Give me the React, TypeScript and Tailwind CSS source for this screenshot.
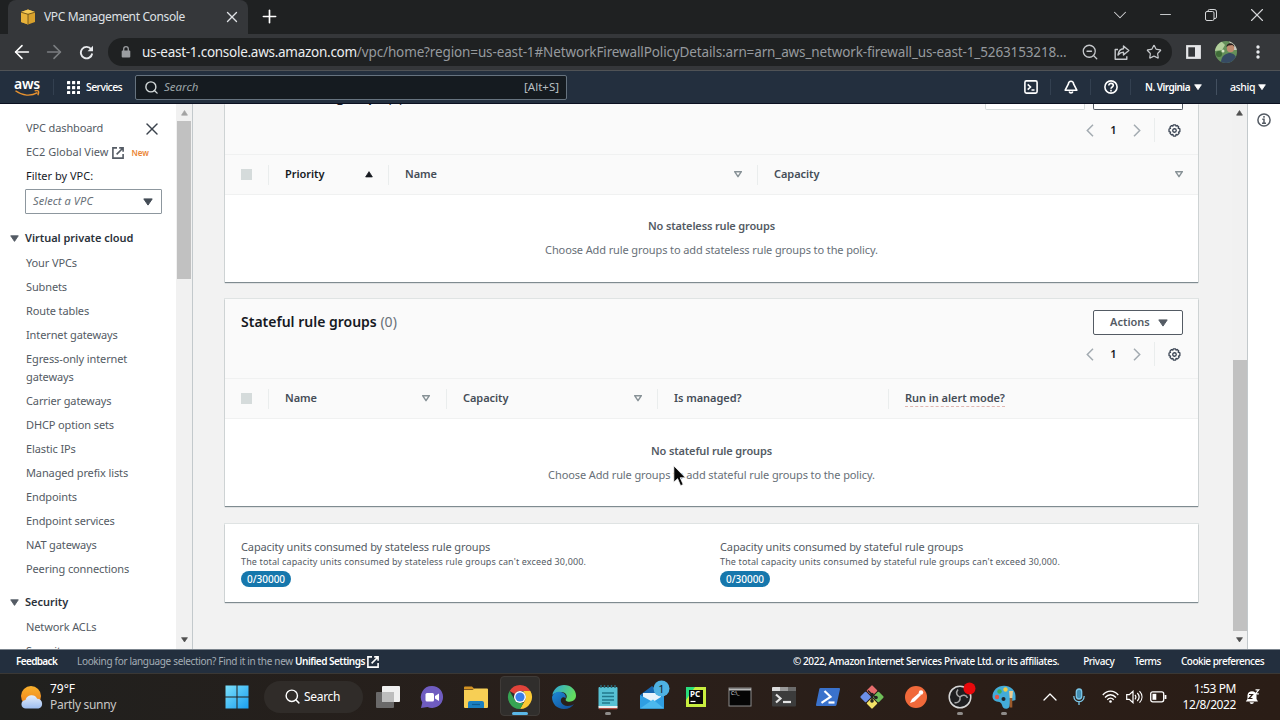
import type { ReactNode } from "react";
import { Search, Star, X, Plus, ArrowLeft, ArrowRight, Minus, ChevronDown, ChevronUp, ZoomOut } from "lucide-react";

const vpcLinks = [
    "Your VPCs", "Subnets", "Route tables", "Internet gateways", "Egress-only internet gateways",
    "Carrier gateways", "DHCP option sets", "Elastic IPs", "Managed prefix lists", "Endpoints",
    "Endpoint services", "NAT gateways", "Peering connections",
];

function Triangle({ up = false, hollow = false, size = 9, className = "" }: { up?: boolean; hollow?: boolean; size?: number; className?: string }) {
    return (
        <svg width={size} height={size * 0.8} viewBox="0 0 10 8" className={`shrink-0 ${className}`}>
            <path d={up ? "M.8 7.4 5 .8 9.2 7.4Z" : "M.8.9 5 7.1 9.2.9Z"} fill={hollow ? "none" : "currentColor"} stroke="currentColor" strokeWidth={hollow ? 1.8 : 1} strokeLinejoin="round" />
        </svg>
    );
}

function External({ className = "" }: { className?: string }) {
    return (
        <svg width="12" height="12" viewBox="0 0 12 12" fill="none" stroke="currentColor" strokeWidth="1.6" className={`shrink-0 ${className}`}>
            <path d="M5 .9H.9v10.2h10.2V7M7.2.9h3.9v3.8M11 1 4.6 7.4" />
        </svg>
    );
}

function Gear() {
    return (
        <svg width="13" height="13" viewBox="0 0 14 14" fill="none" stroke="#3b4554" strokeWidth="1.4" strokeLinejoin="round">
            <path d="M5.8.9h2.4l.4 1.3 1.3-.6 1.7 1.6-.7 1.3 1.9.8v2.9l-1.5.5.6 1.4-1.8 1.7-1.4-.7-.5 1.9H5.8l-.5-1.8-1.4.6-1.7-1.7.6-1.4-1.7-.5V5.4l1.6-.6-.6-1.4 1.7-1.7 1.4.6Z" />
            <circle cx="7" cy="7" r="1.9" />
        </svg>
    );
}

function BrowserTabs() {
    return (
        <div className="flex h-[34px] bg-[#1f2122] pl-2 text-[#dfe1e5]">
            <div className="flex h-full w-[240px] items-center rounded-t-lg bg-[#35373a] pl-[12px] pr-[7px]">
                <svg width="16" height="16" viewBox="0 0 16 16">
                    <path d="M8 .5 15 3v10l-7 2.5L1 13V3Z" fill="#d9a12c" />
                    <path d="m1 3 7 2 7-2-7-2.5Z" fill="#f5c956" />
                    <path d="M1 3l7 2v10.500L1 13Z" fill="#e8b23a" />
                    <path d="M1 3.200 8 5.300l7-2.100M8 5.300v10" stroke="#5c4618" strokeWidth=".8" fill="none" />
                </svg>
                <span className="ml-[8px] flex-1 whitespace-nowrap text-[12px] tracking-[-0.37px]">VPC Management Console</span>
                <X size={18} strokeWidth={1.800} />
            </div>
            <Plus size={21} strokeWidth={1.900} className="ml-[11px] mt-[6px] text-white" />
            <div className="ml-auto flex items-center pr-[12px] pb-[5px] text-[#d5d7d9]">
                <ChevronDown size={22} strokeWidth={1.100} className="mr-[26px]" />
                <Minus size={17} strokeWidth={1.300} className="mr-[31px]" />
                <svg width="12" height="12" viewBox="0 0 12 12" fill="none" stroke="currentColor" className="mr-[29px]">
                    <rect x=".5" y="2.500" width="8.500" height="9" rx="1.500" />
                    <path d="M3 2.500V2A1.500 1.500 0 0 1 4.500.5H9A2.300 2.300 0 0 1 11.500 3v5A1.500 1.500 0 0 1 10 9.500H9" />
                </svg>
                <X size={22} strokeWidth={1.200} />
            </div>
        </div>
    );
}

function AddressBar() {
    return (
        <div className="flex h-[37px] items-center border-b border-[#505356] bg-[#35373a] text-[#c6c9cc]">
            <ArrowLeft size={22} strokeWidth={1.700} className="ml-[11px] text-white" />
            <ArrowRight size={22} strokeWidth={1.700} className="ml-[10px] text-[#7b7e81]" />
            <svg width="15" height="15" viewBox="0 0 15 15" fill="none" stroke="#e8eaed" strokeWidth="1.900" className="ml-[14px]">
                <path d="M12.200 4.300A5.700 5.700 0 1 0 13.200 8.500" />
                <path d="M14 .8v5.400H8.600Z" fill="#e8eaed" stroke="none" />
            </svg>
            <div className="ml-[14px] flex h-[28px] w-[1064px] items-center rounded-full bg-[#1f2122] pl-[13px] pr-[10px]">
                <svg width="10" height="12" viewBox="0 0 10 12" fill="#9b9ea1">
                    <rect x=".7" y="4.500" width="8.600" height="7" rx="1" />
                    <path d="M2.700 5V3a2.300 2.300 0 0 1 4.600 0v2" fill="none" stroke="#9b9ea1" strokeWidth="1.300" />
                </svg>
                <span className="ml-[11px] w-[926px] whitespace-nowrap text-[13.500px] tracking-[-0.13px] text-[#969a9e]">
                    <span className="tracking-[-0.27px] text-[#eceef0]">us-east-1.console.aws.amazon.com</span>/vpc/home?region=us-east-1#NetworkFirewallPolicyDetails:arn=arn_aws_network-firewall_us-east-1_5263153218...
                </span>
                <ZoomOut size={18} strokeWidth={1.700} className="ml-[13px] shrink-0" />
                <svg width="16" height="15" viewBox="0 0 16 15" fill="none" stroke="currentColor" strokeWidth="1.400" strokeLinejoin="round" className="ml-[15px] shrink-0">
                    <path d="M4 4.500H1.200v9.700h11.600v-3M9.500 1v2.800C6 4 4.500 6.500 4 10c1.600-2 3-2.900 5.500-2.900V10l5.300-4.500Z" />
                </svg>
                <Star size={16} strokeWidth={1.800} className="ml-[16px] shrink-0" />
            </div>
            <svg width="15" height="14" viewBox="0 0 15 14" className="ml-[14px]">
                <rect x="1.200" y="1.200" width="12.600" height="11.600" fill="none" stroke="#e6e7e9" strokeWidth="2.200" />
                <path d="M9 1h5v12H9z" fill="#e6e7e9" />
            </svg>
            <svg width="22" height="22" viewBox="0 0 22 22" className="ml-[14px]">
                <clipPath id="face"><circle cx="11" cy="11" r="11" /></clipPath>
                <g clipPath="url(#face)">
                    <path d="M0 0h22v22H0z" fill="#65905a" />
                    <path d="M0 3 6 0l4 4-3 5-7 1Z" fill="#b3cf9c" />
                    <path d="M14 0h8v9h-4Z" fill="#c9c8c3" />
                    <circle cx="4" cy="13" r="3" fill="#3f6b38" /><circle cx="8" cy="10" r="1.500" fill="#d7e5c4" />
                    <ellipse cx="15.500" cy="7" rx="3.700" ry="4.300" fill="#c08c70" />
                    <path d="M11.500 6c-.5-4 7-6 8 0l-2-2-4 .5Z" fill="#28201d" />
                    <path d="M6 22c0-7 4-9 8-10 4 0 8 2 8 10Z" fill="#364a63" />
                </g>
            </svg>
            <svg width="4" height="14" viewBox="0 0 4 14" fill="#e8eaed" className="ml-[19px]">
                <circle cx="2" cy="2" r="1.700" /><circle cx="2" cy="7" r="1.700" /><circle cx="2" cy="12" r="1.700" />
            </svg>
        </div>
    );
}

function AwsHeader() {
    return (
        <header className="flex h-[33px] items-center border-b border-[#0b1020] bg-[#232f3e] text-[11px] font-semibold text-white">
            <div className="ml-[14px] flex w-[26px] flex-col items-center">
                <span className="h-[12px] text-[14px] leading-[11px] tracking-[-0.3px]">aws</span>
                <svg width="25" height="7" viewBox="0 0 25 7" fill="none" stroke="#e8922f" strokeWidth="1.400">
                    <path d="M.5.800c7 5.200 15.500 5.600 22 1.800M19.600.900c4-.9 5 .2 3.300 4.300" />
                </svg>
            </div>
            <i className="ml-[13px] h-[16px] w-px bg-[#334050]" />
            <svg width="13" height="13" viewBox="0 0 13 13" fill="#fff" className="ml-[13px]">
                {[0, 5, 10].map((y) => [0, 5, 10].map((x) => <rect key={`${x}${y}`} x={x} y={y} width="3.200" height="3.200" rx=".5" />))}
            </svg>
            <span className="ml-[6px] w-[37px] whitespace-nowrap pt-[2px] text-[10.500px] font-medium tracking-[-0.6px]">Services</span>
            <div className="ml-[12px] flex h-[25px] w-[432px] items-center rounded-[2px] border border-[#66737f] bg-[#151b20] pl-[8px] pr-[7px] font-normal text-[#9ba5a8]">
                <Search size={15} strokeWidth={2.200} className="text-[#d5dbdb]" />
                <span className="ml-[5px] flex-1 text-[11.500px] italic">Search</span>
                <span className="text-[11.500px] text-[#b7bfc2]">[Alt+S]</span>
            </div>
            <div className="ml-auto flex h-full items-center">
                <svg width="14" height="14" viewBox="0 0 14 14" fill="none" stroke="#fff" strokeWidth="1.600">
                    <rect x=".9" y=".9" width="12.200" height="12.200" rx="1.500" />
                    <path d="m3.700 4.300 2.800 2.700-2.800 2.700M7.500 10h3" />
                </svg>
                <i className="ml-[12px] h-[16px] w-px bg-[#334050]" />
                <svg width="14" height="14" viewBox="0 0 14 14" fill="none" stroke="#fff" strokeWidth="1.600" strokeLinejoin="round" className="ml-[13px]">
                    <path d="M7 1.200c1.700 0 2.500 1.200 2.700 3L12.800 10.200H1.200L4.300 4.200c.2-1.800 1-3 2.700-3ZM5.200 11.500c.4 1.800 3.200 1.800 3.600 0" />
                </svg>
                <i className="ml-[12px] h-[16px] w-px bg-[#334050]" />
                <svg width="14" height="14" viewBox="0 0 14 14" fill="none" stroke="#fff" strokeWidth="1.600" className="ml-[13px]">
                    <circle cx="7" cy="7" r="6.100" />
                    <path d="M4.800 5.600c0-3 4.500-2.800 4.500-.1C9.300 7 7 7 7 8.800M7 9.800v1.600" />
                </svg>
                <i className="ml-[12px] h-[16px] w-px bg-[#334050]" />
                <span className="ml-[14px] w-[45px] whitespace-nowrap pt-px text-[10px] tracking-[-0.53px]">N. Virginia</span>
                <Triangle size={8} className="ml-[4px]" />
                <i className="ml-[14px] h-[16px] w-px bg-[#435060]" />
                <span className="ml-[13px] w-[24px] whitespace-nowrap pt-[2px] text-[10.500px] font-medium tracking-[-0.4px]">ashiq</span>
                <Triangle size={8} className="ml-[4px] mr-[14px]" />
            </div>
        </header>
    );
}

function NavHeading({ children }: { children: ReactNode }) {
    return (
        <div className="flex h-[24px] items-center pl-[10px] text-[11px] font-semibold tracking-[-0.03px] text-[#2b323b]">
            <Triangle size={9} className="mr-[6px] mt-px text-[#545b64]" />
            {children}
        </div>
    );
}

function Sidebar() {
    return (
        <nav className="w-[176px] shrink-0 overflow-hidden bg-white pt-[12px] text-[11px] tracking-[-0.12px] text-[#545b64]">
            <div className="flex h-[24px] items-center justify-between pl-[26px] pr-[14px]">
                VPC dashboard
                <X size={20} strokeWidth={1.700} className="mt-[2px] text-[#3b434d]" />
            </div>
            <div className="flex h-[24px] items-center whitespace-nowrap pl-[26px] tracking-normal">
                EC2 Global View
                <External className="ml-[4px] mt-px" />
                <span className="ml-[7px] mt-[2px] text-[8px] font-semibold text-[#eb8433]">New</span>
            </div>
            <div className="flex h-[24px] items-center pl-[26px] tracking-normal text-[#16191f]">Filter by VPC:</div>
            <div className="ml-[25px] mt-px mb-[12px] flex h-[25px] w-[137px] items-center justify-between rounded-[1px] border border-[#8d979e] pl-[7px] pr-[8px] italic tracking-[0.1px] text-[#687078]">
                Select a VPC
                <Triangle size={10} className="text-[#444c56]" />
            </div>
            <NavHeading>Virtual private cloud</NavHeading>
            <ul className="pt-px">
                {vpcLinks.map((l) => <li key={l} className="w-[165px] py-[3px] pl-[26px] pr-[24px] leading-[18px]">{l}</li>)}
            </ul>
            <div className="h-[9px]" />
            <NavHeading>Security</NavHeading>
            <ul className="pt-px">
                <li className="py-[3px] pl-[26px] leading-[18px]">Network ACLs</li>
                <li className="py-[3px] pl-[26px] leading-[18px]">Security groups</li>
            </ul>
        </nav>
    );
}

function Pager() {
    return (
        <div className="flex h-[24px] items-center justify-end pr-[17px] text-[11px] font-semibold text-[#16191f]">
            <svg width="8" height="13" viewBox="0 0 8 13" fill="none" stroke="#a3abb1" strokeWidth="1.500"><path d="M7 .8 1.300 6.500 7 12.200" /></svg>
            <span className="w-[39px] text-center">1</span>
            <svg width="8" height="13" viewBox="0 0 8 13" fill="none" stroke="#a3abb1" strokeWidth="1.500"><path d="M1 .8 6.700 6.500 1 12.200" /></svg>
            <i className="ml-[13px] mr-[13px] h-[24px] w-px bg-[#eaeded]" />
            <Gear />
        </div>
    );
}

function Cell({ className, children }: { className: string; children: ReactNode }) {
    return <div className={`flex h-[20px] items-center border-l border-[#eaeded] pl-[16px] ${className}`}>{children}</div>;
}

function HeadRow({ children }: { children: ReactNode }) {
    return (
        <div className="flex h-[41px] items-center border-y border-[#f0f1f1] bg-[#fafafa] text-[11px] font-semibold tracking-[-0.05px] text-[#454d57]">
            <div className="w-[43px] pl-[16px]"><div className="-mt-px size-[11px] bg-[#d5dbdb]" /></div>
            {children}
        </div>
    );
}

function EmptyState({ kind }: { kind: string }) {
    return (
        <div className="flex flex-col items-center pt-[19px] text-[11px] text-[#687078]">
            <p className="h-[24px] leading-[24px] font-semibold tracking-[-0.15px] text-[#545b64]">No {kind} rule groups</p>
            <p className="h-[24px] leading-[24px] tracking-[-0.11px]">Choose Add rule groups to add {kind} rule groups to the policy.</p>
        </div>
    );
}

function Capacity({ kind }: { kind: string }) {
    return (
        <div className="w-[479px] pl-[16px] text-[#545b64]">
            <p className="h-[16px] text-[11px] leading-[16px] tracking-[-0.12px]">Capacity units consumed by {kind} rule groups</p>
            <p className="h-[14px] text-[9px] leading-[14px] tracking-[0.14px]">The total capacity units consumed by {kind} rule groups can't exceed 30,000.</p>
            <span className="mt-[2px] flex h-[16px] w-[50px] items-center justify-center rounded-full bg-[#1677ac] text-[10px] font-medium text-white">0/30000</span>
        </div>
    );
}

const card = "shrink-0 w-[973px] bg-white shadow-[0_1px_1px_0_#7f8b90,0_0_0_1px_#dfe3e3]";

function Main() {
    return (
        <main className="flex flex-1 flex-col overflow-hidden bg-[#f2f2f2] pl-[32px]">
            <section className={`${card} h-[178px]`}>
                <div className="flex h-[50px] flex-col bg-[#fafafa]">
                    <div className="relative flex h-[14px] shrink-0 justify-end overflow-hidden pr-[15px]">
                        <span className="absolute left-[16px] top-[-17px] text-[14px] font-semibold leading-[20px] tracking-[-0.05px] text-[#16191f]">Stateless rule groups <span className="font-normal">(0)</span></span>
                        <i className="mr-[8px] h-[6px] w-[100px] rounded-b-[2px] border border-t-0 border-[#d5dbdb] bg-white" />
                        <i className="h-[6px] w-[90px] rounded-b-[2px] border border-t-0 border-[#545b64] bg-white" />
                    </div>
                    <Pager />
                </div>
                <HeadRow>
                    <Cell className="w-[120px] pr-[15px] text-[#16191f]">
                        <span className="flex-1">Priority</span><Triangle up size={8} />
                    </Cell>
                    <Cell className="w-[369px] pr-[15px]">
                        <span className="flex-1">Name</span><Triangle hollow size={8} className="text-[#879196]" />
                    </Cell>
                    <Cell className="flex-1 pr-[15px]">
                        <span className="flex-1">Capacity</span><Triangle hollow size={8} className="text-[#879196]" />
                    </Cell>
                </HeadRow>
                <EmptyState kind="stateless" />
            </section>
            <section className={`${card} mt-[17px] h-[207px]`}>
                <div className="h-[79px] bg-[#fafafa] pt-[11px]">
                    <div className="flex h-[25px] items-center justify-between pl-[16px] pr-[15px]">
                        <h2 className="-mt-[2px] text-[14px] font-semibold text-[#16191f]">Stateful rule groups <span className="font-normal text-[#687078]">(0)</span></h2>
                        <button className="flex h-[25px] w-[90px] items-center justify-between rounded-[2px] border border-[#545b64] bg-white pl-[16px] pr-[14px] text-[11px] font-semibold text-[#545b64]">
                            Actions <Triangle size={10} />
                        </button>
                    </div>
                    <div className="mt-[7px]"><Pager /></div>
                </div>
                <HeadRow>
                    <Cell className="w-[178px] pr-[16px]">
                        <span className="flex-1">Name</span><Triangle hollow size={8} className="text-[#879196]" />
                    </Cell>
                    <Cell className="w-[211px] pr-[15px]">
                        <span className="flex-1">Capacity</span><Triangle hollow size={8} className="text-[#879196]" />
                    </Cell>
                    <Cell className="w-[231px]">Is managed?</Cell>
                    <Cell className="flex-1"><span className="border-b border-dashed border-[#e0b6b0]">Run in alert mode?</span></Cell>
                </HeadRow>
                <div className="pt-px"><EmptyState kind="stateful" /></div>
            </section>
            <section className={`${card} mt-[18px] flex h-[78px] pt-[15px]`}>
                <Capacity kind="stateless" />
                <Capacity kind="stateful" />
            </section>
        </main>
    );
}

function Footer() {
    return (
        <footer className="flex h-[24px] items-center whitespace-nowrap border-t border-[#7b848d] bg-[#232f3e] text-[10px] font-semibold tracking-[-0.52px] text-white">
            <span className="ml-[16px] w-[61px] tracking-[-0.65px]">Feedback</span>
            <span className="font-normal tracking-[-0.33px] text-[#a3adb5]">Looking for language selection? Find it in the new <b className="font-semibold tracking-[-0.5px] text-white">Unified Settings</b></span>
            <External className="ml-[2px]" />
            <span className="ml-auto font-medium tracking-[-0.4px]">© 2022, Amazon Internet Services Private Ltd. or its affiliates.</span>
            <span className="ml-[24px] font-medium tracking-[-0.45px]">Privacy</span>
            <span className="ml-[20px] font-medium tracking-[-0.5px]">Terms</span>
            <span className="ml-[20px] mr-[16px] font-medium tracking-[-0.5px]">Cookie preferences</span>
        </footer>
    );
}

function App24({ children, active = false, open = false }: { children: ReactNode; active?: boolean; open?: boolean }) {
    return (
        <div className="relative flex h-[47px] w-[44px] shrink-0 items-center justify-center">
            {active && <i className="absolute left-[2px] top-[3px] h-[40px] w-[40px] rounded-[4px] border border-[#3f3b38] bg-[#302e2c]" />}
            <svg width="24" height="24" viewBox="0 0 24 24" className="relative overflow-visible">{children}</svg>
            {active && <i className="absolute bottom-[5px] left-[14px] h-[3px] w-[16px] rounded-full bg-[#5bb8e8]" />}
            {open && <i className="absolute bottom-[5px] left-[19px] h-[3px] w-[6px] rounded-full bg-[#8f8c8a]" />}
        </div>
    );
}

function Taskbar() {
    return (
        <div className="flex h-[47px] items-center border-t border-[#3a3835] bg-linear-to-r from-[#20201e] via-[#2a1f1a] to-[#2a1d16] pb-px text-white">
            <svg width="24" height="26" viewBox="0 0 24 26" className="ml-[20px]">
                <defs>
                    <linearGradient id="sun" x2="0" y2="1"><stop stopColor="#f9b12c" /><stop offset="1" stopColor="#ee7e1c" /></linearGradient>
                    <linearGradient id="cloud" x2="0" y2="1"><stop stopColor="#e5eefb" /><stop offset="1" stopColor="#9dbdf0" /></linearGradient>
                </defs>
                <circle cx="11" cy="12" r="10" fill="url(#sun)" />
                <path d="M6 24.500a4.300 4.300 0 0 1-.5-8.600 6.300 6.300 0 0 1 11.700-1.200A5 5 0 0 1 18.500 24.500Z" fill="url(#cloud)" />
            </svg>
            <div className="ml-[6px] w-[165px] text-[12px] leading-[16px]">
                <div>79°F</div>
                <div className="tracking-[-0.3px] text-[#c9c7c5]">Partly sunny</div>
            </div>
            <App24>
                <defs><linearGradient id="win" x2="1" y2="1"><stop stopColor="#7be0fb" /><stop offset="1" stopColor="#1a9ff0" /></linearGradient></defs>
                <path d="M.5.5h11v11H.5zM12.500.5h11v11h-11zM.5 12.500h11v11H.5zM12.500 12.500h11v11h-11z" fill="url(#win)" />
            </App24>
            <div className="ml-[5px] mr-[3px] flex h-[32px] w-[99px] items-center rounded-full bg-[#302c29] pl-[20px] text-[12px] tracking-[-0.3px]">
                <Search size={17} strokeWidth={2} className="mr-[3px]" />Search
            </div>
            <App24>
                <rect x="6" y="1" width="18" height="16" rx="1" fill="#f0f0f0" />
                <rect x="0" y="7" width="18" height="16" rx="1" fill="#777" opacity=".85" />
                <path d="M6 7h12v10H6z" fill="#bdbdbd" />
            </App24>
            <App24>
                <path d="M12 1a11 11 0 1 1-4.500 21L1 23l1.300-5.500A11 11 0 0 1 12 1Z" fill="#6f5cc0" />
                <rect x="5.500" y="8" width="8.500" height="8.500" rx="1.500" fill="#fff" /><path d="m15 11 4-2.500v7.500l-4-2.500Z" fill="#fff" />
            </App24>
            <App24>
                <path d="M0 2.500a1 1 0 0 1 1-1h7l3 3H0Z" fill="#d59322" />
                <path d="M0 5h8.500l2-1.500H23a1 1 0 0 1 1 1V22a1 1 0 0 1-1 1H1a1 1 0 0 1-1-1Z" fill="#f7cf55" />
                <path d="M4 23v-5a2 2 0 0 1 2-2h12a2 2 0 0 1 2 2v5Z" fill="#1b7fc0" /><path d="M8 19.500h8" stroke="#0d5c92" strokeWidth="1.200" />
            </App24>
            <App24 active>
                <path d="M1.600 6A12 12 0 0 1 22.400 6H12a6 6 0 0 0-5.200 3Z" fill="#e0433a" />
                <path d="M22.400 6A12 12 0 0 1 12 24l5.200-9a6 6 0 0 0 0-6L15 6Z" fill="#fbc934" />
                <path d="M1.600 6 6.800 15a6 6 0 0 0 5.200 3h3.400L12 24A12 12 0 0 1 1.600 6Z" fill="#36a453" />
                <circle cx="12" cy="12" r="6" fill="#fff" /><circle cx="12" cy="12" r="4.600" fill="#3b7eea" />
            </App24>
            <App24>
                <defs>
                    <linearGradient id="edgeTop" x2="1" y2=".4"><stop stopColor="#2aa3e0" /><stop offset="1" stopColor="#63dd5e" /></linearGradient>
                    <linearGradient id="edgeLow" x2="1" y2="1"><stop stopColor="#1d8ad6" /><stop offset="1" stopColor="#124a93" /></linearGradient>
                </defs>
                <path d="M.3 10C1.500 4 6.300 0 12 0c7 0 12 5 12 10.500 0 4-3 6.200-6.500 6.200-3.200 0-4.500-1.300-3.500-2.700 2-3 0-7-4.500-7C5 7 1.500 9 .3 10Z" fill="url(#edgeTop)" />
                <path d="M0 12c1-4 5-6 9-5 4 .8 5.500 4 4.500 6.500-.7-1-2-1.500-3-1-4 2.500-.5 8.500 5 8.500 3 0 5-1 6.500-2C20 22 16.500 24 12 24 5 24 0 19 0 12Z" fill="url(#edgeLow)" />
            </App24>
            <App24 open>
                <rect x="2.500" y="2" width="19" height="20" rx="1" fill="#57c1d4" />
                <path d="M2.500 21h19v2.500h-19z" fill="#e9eef0" /><path d="M3 23.800h18" stroke="#c0392b" />
                <path d="M5 0v3M8.500 0v3M12 0v3M15.500 0v3M19 0v3" stroke="#2a6572" strokeWidth="1.500" />
                <path d="M6 8h12M6 11.500h12M6 15h12M6 18h8" stroke="#22788c" strokeWidth="1.300" />
            </App24>
            <App24>
                <path d="M0 10 12 1l12 9v13.500H0Z" fill="#1767b0" />
                <path d="M3 8h18v9H3z" fill="#e8f3fb" /><path d="M0 10v13.500h24V10L13 17Z" fill="#2f9ee2" /><path d="m0 23.500 13-9 11 9Z" fill="#4bb8ef" />
                <circle cx="21.500" cy="3.500" r="8" fill="#4fb2e2" />
                <text x="21.500" y="7.500" fontSize="11" textAnchor="middle" fill="#13222c">1</text>
            </App24>
            <App24>
                <rect x="2" y="2" width="20" height="20" fill="#c8ee3f" /><path d="M2 2h9L2 15Z" fill="#2ade7d" />
                <rect x="5" y="5" width="14" height="14" fill="#0a0a0a" />
                <text x="6" y="12" fontSize="8" fontWeight="700" fill="#fff">PC</text><path d="M6.500 16.500h5" stroke="#fff" strokeWidth="1.200" />
            </App24>
            <App24>
                <rect x="1" y="3" width="22" height="18" fill="#050505" stroke="#8d8d8d" /><path d="M1 4.500h22" stroke="#b9b9b9" strokeWidth="2" />
                <text x="3" y="10" fontSize="5" fill="#eee">C:\_</text>
            </App24>
            <App24>
                <rect x="0" y="2" width="24" height="19.500" rx="1" fill="#3c3c3c" /><path d="M0 3a1 1 0 0 1 1-1h7v4H0z" fill="#dadada" /><path d="M8 2h8v4H8z" fill="#999" /><path d="M16 2h8v4h-8z" fill="#6b6b6b" />
                <path d="m4 9.500 4.500 4L4 17.500" fill="none" stroke="#e4e4e4" strokeWidth="2.200" /><path d="M11 17h8" stroke="#e4e4e4" strokeWidth="2.200" />
            </App24>
            <App24>
                <path d="M4.500 3H23a1 1 0 0 1 1 1.200L20.500 20a1.500 1.500 0 0 1-1.500 1H1a1 1 0 0 1-1-1.200L3.300 4A1.300 1.300 0 0 1 4.500 3Z" fill="#3a72cc" />
                <path d="m8.500 6 6 5.800-9 6" fill="none" stroke="#fff" strokeWidth="2.200" /><path d="M12.500 17.500h6" stroke="#fff" strokeWidth="2.200" />
            </App24>
            <App24>
                <g transform="rotate(45 12 12)">
                    <rect x="3.500" y="3.500" width="8" height="8" rx="1" fill="#e56c6c" /><rect x="12.500" y="3.500" width="8" height="8" rx="1" fill="#6fbf59" />
                    <rect x="3.500" y="12.500" width="8" height="8" rx="1" fill="#6c8fe8" /><rect x="12.500" y="12.500" width="8" height="8" rx="1" fill="#f3e268" />
                </g>
                <path d="m8 5.500 4 4v6M12 9.500l4 3" stroke="#222" strokeWidth="1.400" fill="none" />
                <circle cx="12" cy="9.500" r="1.800" fill="#222" /><circle cx="16" cy="12.500" r="1.800" fill="#222" /><circle cx="12" cy="16" r="1.800" fill="#222" />
            </App24>
            <App24>
                <circle cx="12" cy="12" r="11" fill="#f0693a" />
                <path d="m6 18 2-4 7-6 2 2-6.500 6.500Z" fill="#fff" /><circle cx="17" cy="7.500" r="2.200" fill="#fff" />
            </App24>
            <App24 open>
                <circle cx="12" cy="12" r="10.800" fill="#1e1e20" stroke="#d6d6d6" strokeWidth="1.500" />
                <path d="M12 12c-3.500-1-4.500-4.500-2-7.500M12 12c2.500-3 6.500-2 7.500 1M12 12c.8 3.800-2 6.500-5.500 5.500" fill="none" stroke="#a5a5a5" strokeWidth="1.500" />
                <circle cx="21.500" cy="3.500" r="6" fill="#e8090c" />
            </App24>
            <App24 open>
                <path d="M12 .8C18.500.8 23.500 5.200 23.500 11v4c-2 1-4 .5-5 2-1.400 2 .3 5.500-3 6.500-3 .8-5-.8-5.500-3.500-.4-2-2-3-4-3.300C2 16 .5 14 .5 11.500.5 5.500 5.500.8 12 .8Z" fill="#43acd9" />
                <circle cx="5" cy="12" r="2.200" fill="#e1594a" /><circle cx="7.500" cy="6.500" r="2.200" fill="#3cae55" /><circle cx="13.500" cy="4.500" r="2.200" fill="#f0cb45" /><circle cx="11.500" cy="14" r="2" fill="#23282c" />
                <path d="M17 6h4l-.7 7h-2.600Z" fill="#e8cb94" /><path d="M19 13v9.500" stroke="#9c5a2c" strokeWidth="2.600" />
            </App24>
            <ChevronUp size={24} strokeWidth={1.300} className="ml-[12px]" />
            <svg width="12" height="17" viewBox="0 0 12 17" fill="none" stroke="#7cc7e8" strokeWidth="1.300" className="ml-[11px]">
                <rect x="3.300" y="1" width="5.400" height="10" rx="2.700" fill="#4690b3" /><path d="M.8 8c.2 7.500 10.200 7.500 10.400 0M6 13.500V17" />
            </svg>
            <svg width="17" height="13" viewBox="0 0 17 13" fill="none" stroke="#fff" strokeWidth="1.300" className="ml-[17px]">
                <path d="M.8 5c4.500-5.200 11-5.200 15.500 0M3 7.500c3.300-3.700 7.700-3.700 11 0M5.300 9.700c2-2 4.500-2 6.400 0" /><circle cx="8.500" cy="11.500" r="1.300" fill="#fff" stroke="none" />
            </svg>
            <svg width="17" height="14" viewBox="0 0 17 14" fill="none" stroke="#fff" strokeWidth="1.200" className="ml-[7px]">
                <path d="M.7 4.700h2.600L7 1.300v11.400L3.300 9.300H.7ZM9 4.800c1.200 1.500 1.200 3 0 4.500M11.300 3c2.300 2.500 2.300 5.500 0 8M13.500 1.200c3.300 3.500 3.300 8 0 11.500" />
            </svg>
            <svg width="17" height="12" viewBox="0 0 17 12" fill="none" stroke="#fff" strokeWidth="1.300" className="ml-[7px]">
                <rect x=".7" y=".8" width="13" height="10" rx="2" /><path d="M2.500 2.800h3.800v6H2.500z" fill="#fff" stroke="none" /><path d="M15.500 4v4" strokeWidth="1.800" />
            </svg>
            <div className="ml-auto whitespace-nowrap text-right text-[12px] leading-[16px] tracking-[-0.4px]">
                <div>1:53 PM</div>
                <div>12/8/2022</div>
            </div>
            <svg width="15" height="16" viewBox="0 0 15 16" className="ml-[9px] mr-[20px]">
                <path d="M.8 12.500 2.500 10V6A4.600 4.600 0 0 1 11.500 6v4l1.500 2.500ZM4.500 13.300h4.500a2.300 2.300 0 0 1-4.500 0Z" fill="#fff" />
                <path d="M4 5.500h3.500L4 9.500h3.500" stroke="#2a1d16" strokeWidth="1.200" fill="none" /><path d="M10.500.8h3.300l-3.300 4h3.300" stroke="#fff" strokeWidth="1.200" fill="none" />
            </svg>
        </div>
    );
}

export default function App() {
    return (
        <div className="relative flex h-[720px] w-[1280px] flex-col overflow-hidden font-['Noto_Sans',sans-serif]">
            <BrowserTabs />
            <AddressBar />
            <AwsHeader />
            <div className="flex h-[545px] overflow-hidden">
                <Sidebar />
                <div className="flex w-[17px] shrink-0 flex-col items-center border-r border-[#c3c9cc] bg-[#f1f1f1]">
                    <Triangle up size={7} className="mt-[6px] text-[#a3a3a3]" />
                    <i className="mt-[5px] h-[158px] w-[14px] bg-[#c1c1c1]" />
                    <Triangle size={7} className="mb-[6px] mt-auto text-[#505050]" />
                </div>
                <Main />
                <div className="flex w-[16px] shrink-0 flex-col items-center border-r border-[#c3c9cc] bg-[#f1f1f1]">
                    <Triangle up size={7} className="mt-[6px] text-[#505050]" />
                    <i className="mb-[6px] mt-auto h-[271px] w-[14px] bg-[#c1c1c1]" />
                    <Triangle size={7} className="mb-[6px] text-[#505050]" />
                </div>
                <aside className="w-[32px] shrink-0 bg-white pl-[9px] pt-[9px]">
                    <svg width="14" height="14" viewBox="0 0 14 14" fill="none" stroke="#545b64" strokeWidth="1.500">
                        <circle cx="7" cy="7" r="6.100" /><path d="M7 3v1.700M5.300 6.300H7v4M5 10.200h4" />
                    </svg>
                </aside>
            </div>
            <Footer />
            <Taskbar />
            <svg width="14" height="22" viewBox="0 0 14 22" className="absolute left-[673px] top-[465px]">
                <path d="M.8.800v16.500l3.800-3.600 3 7 2.600-1.200-3-6.700h5.300Z" fill="#050505" stroke="#fff" strokeWidth=".8" />
            </svg>
        </div>
    );
}
